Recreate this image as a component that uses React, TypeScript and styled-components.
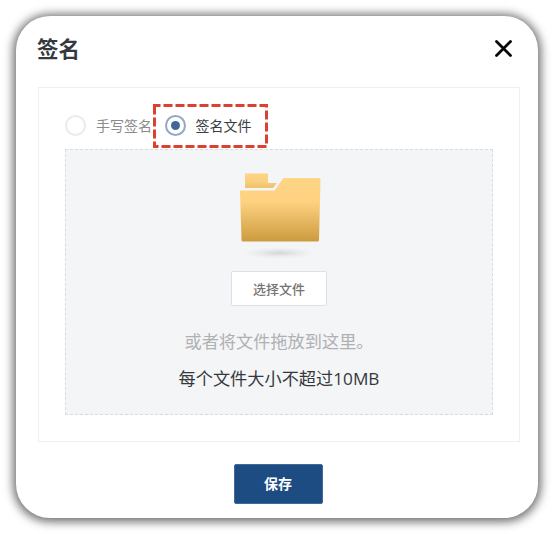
import React from "react";
import styled, { createGlobalStyle } from "styled-components";

const GlobalStyle = createGlobalStyle`
  * { box-sizing: border-box; }
  body {
    margin: 0;
    background: #fff;
    font-family: "Open Sans", "Noto Sans CJK SC", sans-serif;
    overflow: hidden;
  }
`;

const Page = styled.div`
  width: 554px;
  height: 534px;
  padding: 16px;
`;

const Dialog = styled.section`
  width: 522px;
  height: 502px;
  border-radius: 34px;
  background: #fff;
  box-shadow: 0 1px 10px 3px rgba(0, 0, 0, 0.56);
  display: flex;
  flex-direction: column;
  padding: 0 18px 0 22px;
`;

const Header = styled.header`
  height: 71px;
  display: flex;
  align-items: center;
  justify-content: space-between;
  padding: 0 7px 6px 0;
`;

const Title = styled.h2`
  margin: 0 0 0 -1px;
  font-size: 21.5px;
  line-height: 30px;
  font-weight: 700;
  color: #343a40;
`;

const CloseButton = styled.button`
  border: 0;
  padding: 0;
  background: none;
  width: 19px;
  height: 19px;
  display: flex;
`;

const Panel = styled.div`
  height: 355px;
  border: 1px solid #eeeff0;
  padding: 16px 26px 26px;
  display: flex;
  flex-direction: column;
`;

const Options = styled.div`
  height: 45px;
  display: flex;
  align-items: flex-start;
  position: relative;
`;

const Option = styled.label<{ $active?: boolean }>`
  display: flex;
  align-items: center;
  gap: 10px;
  height: 43px;
  width: 99.5px;
  font-size: 14px;
  white-space: nowrap;
  color: ${(p) => (p.$active ? "#3a3d42" : "#8b8b8b")};
`;

const Radio = styled.span<{ $active?: boolean }>`
  flex: none;
  width: 21px;
  height: 21px;
  border-radius: 50%;
  border: ${(p) => (p.$active ? "2px solid #93a8c5" : "2px solid #e9ecef")};
  display: flex;
  align-items: center;
  justify-content: center;
  &::after {
    content: "";
    width: 9px;
    height: 9px;
    border-radius: 50%;
    background: ${(p) => (p.$active ? "#41669a" : "transparent")};
  }
`;

const OptionText = styled.span`
  margin-top: -1px;
`;

const Highlight = styled.svg`
  position: absolute;
  left: 88px;
  top: 0;
`;

const DropZone = styled.div`
  height: 266px;
  background: #f3f5f7;
  border: 1px dashed #d9dcdf;
  display: flex;
  flex-direction: column;
  align-items: center;
`;

const Folder = styled.svg`
  display: block;
  margin-top: 20px;
  margin-left: 2px;
  flex: none;
`;

const PickButton = styled.button`
  width: 96px;
  height: 35px;
  margin-top: 11px;
  flex: none;
  border: 1px solid #dde0e4;
  border-radius: 2px;
  background: #fff;
  font: 500 13px "Open Sans", "Noto Sans CJK SC", sans-serif;
  color: #747474;
  padding: 0;
`;

const Hint = styled.p<{ $strong?: boolean }>`
  margin: ${(p) => (p.$strong ? "9px 0 0" : "22px 0 0")};
  height: 28px;
  line-height: 28px;
  font-size: ${(p) => (p.$strong ? "17.2px" : "17.2px")};
  color: ${(p) => (p.$strong ? "#36383c" : "#b0b0b2")};
  white-space: nowrap;
`;

const Footer = styled.footer`
  display: flex;
  justify-content: center;
  padding: 22px 2px 0 0;
`;

const SaveButton = styled.button`
  width: 89px;
  height: 40px;
  border: 1px solid #41699a;
  border-radius: 2px;
  background: #1d4c82;
  color: #fff;
  font: 700 14px "Open Sans", "Noto Sans CJK SC", sans-serif;
  padding: 0 0 2px;
`;

export default function App() {
  return (
    <Page>
      <GlobalStyle />
      <Dialog>
        <Header>
          <Title>签名</Title>
          <CloseButton aria-label="关闭">
            <svg width="19" height="19" viewBox="0 0 19 19">
              <path d="M2.500 2.500 16.500 16.500M16.500 2.500 2.500 16.500" stroke="#080808" strokeWidth="2.8" strokeLinecap="round" />
            </svg>
          </CloseButton>
        </Header>
        <Panel>
          <Options>
            <Option>
              <Radio />
              <OptionText>手写签名</OptionText>
            </Option>
            <Option $active>
              <Radio $active />
              <OptionText>签名文件</OptionText>
            </Option>
            <Highlight width="116" height="45" viewBox="0 0 116 45" fill="none">
              <rect x="1.5" y="1.5" width="112" height="41" stroke="#dc402e" strokeWidth="3" strokeDasharray="9 3" strokeDashoffset="3" />
            </Highlight>
          </Options>
          <DropZone>
            <Folder width="90" height="90" viewBox="0 0 90 90">
              <defs>
                <linearGradient id="folderFace" x1="0" y1="0" x2="0" y2="1">
                  <stop offset="0" stopColor="#ffd486" />
                  <stop offset="0.38" stopColor="#fdd180" />
                  <stop offset="1" stopColor="#cc9b3e" />
                </linearGradient>
                <linearGradient id="folderTab" x1="0" y1="0" x2="0" y2="1">
                  <stop offset="0" stopColor="#ffd486" />
                  <stop offset="0.55" stopColor="#fad07e" />
                  <stop offset="1" stopColor="#ecc06c" />
                </linearGradient>
                <radialGradient id="folderShade">
                  <stop offset="0" stopColor="#bcbec0" stopOpacity="0.6" />
                  <stop offset="1" stopColor="#d8d9db" stopOpacity="0" />
                </radialGradient>
              </defs>
              <ellipse cx="44" cy="83" rx="36" ry="6" fill="url(#folderShade)" />
              <path d="M10 3.5H33V13H42L38 18H10Z" fill="url(#folderTab)" />
              <path d="M6 20.5H39.5L48.5 8H84Q85.500 8 85.500 9.500L84 70Q84 71.500 82.500 71.500H8Q6.500 71.500 6.500 70L5 21.500Q5 20.500 6 20.500Z" fill="url(#folderFace)" />
            </Folder>
            <PickButton>选择文件</PickButton>
            <Hint>或者将文件拖放到这里。</Hint>
            <Hint $strong>每个文件大小不超过10MB</Hint>
          </DropZone>
        </Panel>
        <Footer>
          <SaveButton>保存</SaveButton>
        </Footer>
      </Dialog>
    </Page>
  );
}
